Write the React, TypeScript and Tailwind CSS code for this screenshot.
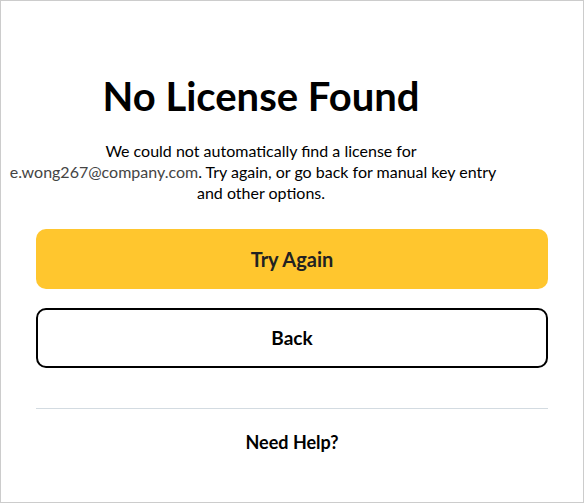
import React from "react";

export default function App() {
  return (
    <div
      className="box-border flex h-[503px] w-[584px] flex-col border border-[#cccccc] bg-white px-[35px] text-black"
      style={{ fontFamily: 'Lato, "Noto Sans", sans-serif' }}
    >
      <h1 className="mx-[-35px] mt-[67px] pr-[62px] text-center text-[40px] font-bold leading-[56px]">
        No License Found
      </h1>
      <div className="mx-[-35px] mt-[16px] pr-[62px] text-center text-[16px] leading-[21px]">
        <div>We could not automatically find a license for</div>
        <div className="mr-[16px] whitespace-nowrap">
          <span className="text-[#444444]">e.wong267@company.com</span>. Try again, or go back for
          manual key entry
        </div>
        <div>and other options.</div>
      </div>
      <button className="mt-[26px] flex h-[60px] w-full items-center justify-center rounded-[10px] bg-[#ffc62e] text-[20px] font-bold text-[#222222]">
        Try Again
      </button>
      <button className="mt-[19px] flex h-[60px] w-full items-center justify-center rounded-[10px] border-2 border-black bg-white text-[19px] font-bold text-black">
        Back
      </button>
      <div className="mt-[40px] h-px w-full bg-[#d3dbe1]" />
      <div className="mt-[20px] text-center text-[18px] font-bold">Need Help?</div>
    </div>
  );
}
